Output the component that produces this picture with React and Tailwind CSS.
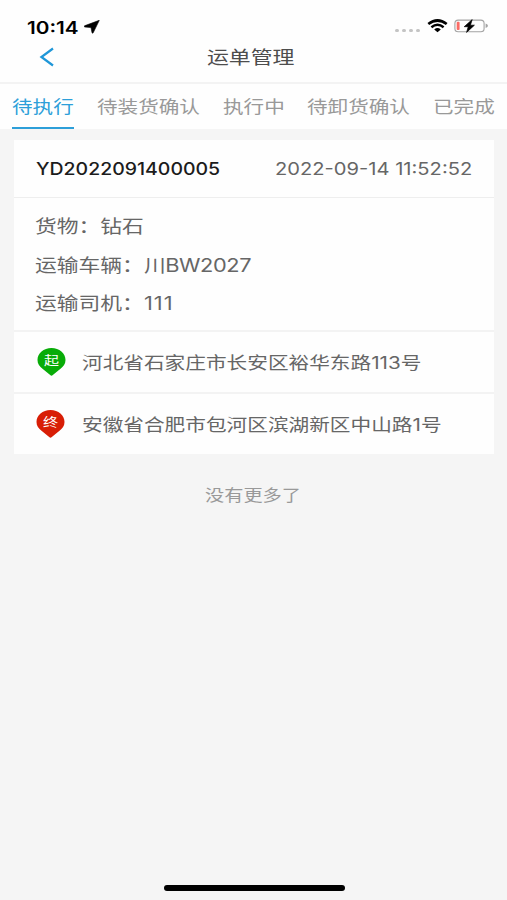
import React, { useState } from 'react'

const tabs = [
  { key: 'todo', label: '待执行', width: 'w-[62px]' },
  { key: 'load', label: '待装货确认', width: 'w-[103px]' },
  { key: 'doing', label: '执行中', width: 'w-[62px]' },
  { key: 'unload', label: '待卸货确认', width: 'w-[103px]' },
  { key: 'done', label: '已完成', width: 'w-[62px]' },
]

const order = {
  no: 'YD2022091400005',
  time: '2022-09-14 11:52:52',
  fields: [
    { label: '货物：', value: '钻石', spacing: '' },
    { label: '运输车辆：', value: '川BW2027', spacing: 'tracking-[-0.35px]' },
    { label: '运输司机：', value: '111', spacing: 'tracking-[0.9px]' },
  ],
  stops: [
    { mark: '起', color: 'text-[#08ac08]', shift: 'ml-[23px] mr-[16px]', address: '河北省石家庄市长安区裕华东路113号' },
    { mark: '终', color: 'text-[#d81e06]', shift: 'ml-[22px] mr-[17px]', address: '安徽省合肥市包河区滨湖新区中山路1号' },
  ],
}

// wide lettering
function Wide({ className = '', children }) {
  return (
    <span className={`inline-block origin-left whitespace-nowrap ${className}`}>{children}</span>
  )
}

function StatusBar() {
  return (
    <div className="flex h-[40px] items-start pl-[27px] pr-[18px] pt-[16px] text-black">
      <div className="h-[20px] w-[57px]">
        <Wide className="scale-x-[1.22] text-[17px] font-semibold leading-[20px]">10:14</Wide>
      </div>
      <svg className="mt-[4px]" width="16" height="14" viewBox="0 0 16 14">
        <path d="M15.3 0.3 L0.5 5.8 Q-0.2 6.8 0.8 7 L7 7.6 L8 12.8 Q8.5 13.6 9.2 12.8 Z" fill="currentColor" stroke="currentColor" strokeWidth="0.6" />
      </svg>
      <div className="ml-auto mt-[13px] flex gap-[3px]">
        {[0, 1, 2, 3].map((i) => <i key={i} className="h-[3px] w-[4px] rounded-full bg-[#c4c4c4]" />)}
      </div>
      <svg className="ml-[7px] mt-[3px]" width="21" height="14" viewBox="0 0 21 14">
        <path d="M1.3 5 Q10.5 -2 19.7 5" fill="none" stroke="currentColor" strokeWidth="2.7" />
        <path d="M4.4 8.2 Q10.5 3.3 16.6 8.2" fill="none" stroke="currentColor" strokeWidth="2.4" />
        <path d="M7.2 10.4 Q10.5 7.6 13.8 10.4 L10.5 13.2 Z" fill="currentColor" />
      </svg>
      <svg className="ml-[6px] mt-[3px]" width="35" height="14" viewBox="0 0 35 14">
        <rect x="0.9" y="1.1" width="29.2" height="11.6" rx="3.3" fill="none" stroke="#a3a3a3" strokeWidth="1.1" />
        <path d="M31.6 4.6 Q34 5.4 34 6.8 Q34 8.2 31.6 9 Z" fill="#a3a3a3" />
        <rect x="2.7" y="2.8" width="2.9" height="8.2" rx="1" fill="#fb6b65" />
        <path d="M18.2 0.6 L10.2 7.7 H14.2 L12.6 13.4 L20.4 6.2 H16.4 Z" fill="#000" stroke="#000" strokeWidth="0.7" />
      </svg>
    </div>
  )
}

function Pin({ mark, color, shift }) {
  return (
    <svg className={`shrink-0 ${color} ${shift}`} width="29" height="28" viewBox="0 0 29 28">
      <path d="M14.5 0 C22.4 0 28.5 5 28.5 12 C28.5 16 26.5 18.5 23.2 21 L15.8 27.1 Q14.5 28.2 13.2 27.1 L5.8 21 C2.5 18.5 0.5 16 0.5 12 C0.5 5 6.6 0 14.5 0 Z" fill="currentColor" />
      <text x="12.1" y="17" transform="scale(1.2 1)" textAnchor="middle" fontSize="12.5" fill="#fff">{mark}</text>
    </svg>
  )
}

export default function App() {
  const [active, setActive] = useState('todo')

  return (
    <div className="flex h-[900px] w-[507px] flex-col overflow-hidden bg-[#f5f5f5] font-[Inter,'Noto_Sans_CJK_SC',sans-serif]">
      <header className="h-[84px] border-b-2 border-[#f3f3f3] bg-[#fefefe]">
        <StatusBar />
        <div className="flex h-[34px] items-center pl-[39px]">
          <svg width="16" height="20" viewBox="0 0 16 20">
            <path d="M14 1.5 L2.4 10 L14 18.5" fill="none" stroke="#1f97d8" strokeWidth="2.2" />
          </svg>
          <h1 className="ml-[152px] pt-[2px] text-[#4d4d4d]">
            <Wide className="scale-x-[1.215] text-[18px] leading-[34px]">运单管理</Wide>
          </h1>
        </div>
      </header>

      <nav className="flex h-[45px] justify-between bg-[#fefefe] pl-[12px] pr-[12px]">
        {tabs.map((tab) => (
          <button
            key={tab.key}
            onClick={() => setActive(tab.key)}
            className={`h-[45px] shrink-0 border-b-2 pt-[2px] text-left ${tab.width} ${active === tab.key ? 'border-[#2d9fd9] text-[#2d9fd9]' : 'border-transparent text-[#999]'}`}
          >
            <Wide className="scale-x-[1.21] text-[17px] leading-[43px]">{tab.label}</Wide>
          </button>
        ))}
      </nav>

      <main className="px-[14px] pt-[11px]">
        <section className="w-[480px] bg-[#fefefe] text-[#666]">
          <div className="flex h-[58px] items-center border-b border-[#eee] pl-[22px] pt-[2px]">
            <div className="w-[239px] text-[#1c1c1c]">
              <Wide className="scale-x-[1.145] text-[17px] font-medium">{order.no}</Wide>
            </div>
            <Wide className="scale-x-[1.185] text-[17px]">{order.time}</Wide>
          </div>
          <div className="h-[134px] border-b-2 border-[#f3f3f3] pl-[21px] pt-[10px]">
            {order.fields.map((f) => (
              <div key={f.label} className="h-[38.5px]">
                <Wide className="scale-x-[1.21] text-[18px] leading-[38px]">
                  {f.label}
                  <span className={f.spacing}>{f.value}</span>
                </Wide>
              </div>
            ))}
          </div>
          {order.stops.map((s) => (
            <div key={s.mark} className="flex h-[62px] items-center border-b-2 border-[#f3f3f3] last:h-[60px] last:border-b-0">
              <Pin mark={s.mark} color={s.color} shift={s.shift} />
              <Wide className="scale-x-[1.215] pt-[4px] text-[17px]">{s.address}</Wide>
            </div>
          ))}
        </section>
        <p className="mt-[29px] pl-[191px] text-[#999]">
          <Wide className="scale-x-[1.2] text-[16px]">没有更多了</Wide>
        </p>
      </main>

      <div className="mb-[9px] ml-[164px] mt-auto h-[6px] w-[181px] rounded-full bg-black" />
    </div>
  )
}
